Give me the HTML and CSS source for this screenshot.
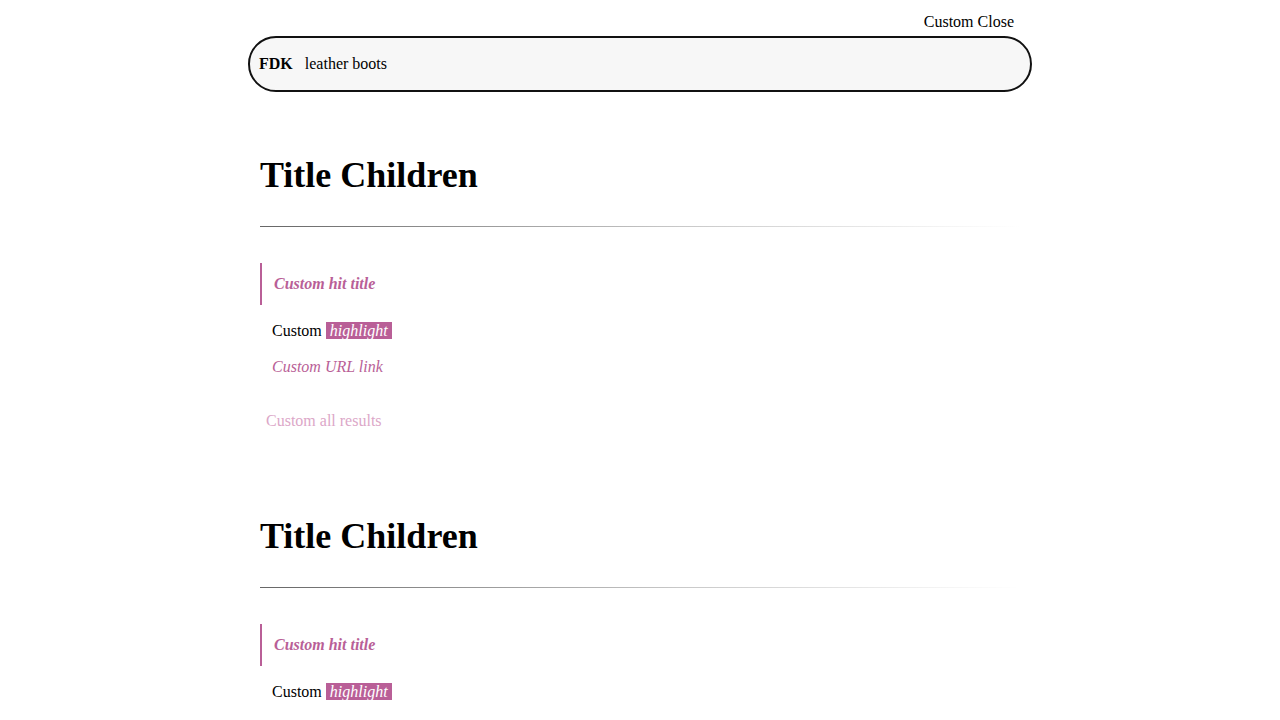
FILE: index.html
```html
<!DOCTYPE html>
<html lang="en">
<head>
<meta charset="utf-8">
<title>Search</title>
<link rel="stylesheet" href="styles.css">
</head>
<body>
<div class="wrap">
  <div class="close-row"><span class="close">Custom Close</span></div>
  <div class="search">
    <span class="logo">FDK</span>
    <span class="query">leather boots</span>
  </div>

  <section class="section">
    <h1 class="title">Title Children</h1>
    <div class="divider"></div>
    <div class="hit">
      <span class="hit-title">Custom hit title</span>
    </div>
    <div class="hit-body">
      <div class="line">Custom <mark class="hl">highlight</mark></div>
      <div class="line link">Custom URL link</div>
    </div>
    <div class="all">Custom all results</div>
  </section>

  <section class="section second">
    <h1 class="title">Title Children</h1>
    <div class="divider"></div>
    <div class="hit">
      <span class="hit-title">Custom hit title</span>
    </div>
    <div class="hit-body">
      <div class="line">Custom <mark class="hl">highlight</mark></div>
      <div class="line link">Custom URL link</div>
    </div>
    <div class="all">Custom all results</div>
  </section>
</div>
</body>
</html>
```

FILE: styles.css
```css
html, body {
  margin: 0;
  padding: 0;
  background: #ffffff;
}

body {
  font-family: "Liberation Serif", "Times New Roman", serif;
  font-size: 16px;
  color: #000;
}

.wrap {
  width: 800px;
  margin: 0 auto;
}

.close-row {
  display: flex;
  justify-content: flex-end;
  padding: 12px 26px 0 0;
  height: 20px;
  line-height: 20px;
  margin-bottom: 4px;
}

.search {
  margin: 0 8px;
  height: 52px;
  border: 2px solid #111;
  border-radius: 28px;
  background: #f7f7f7;
  display: flex;
  align-items: center;
  padding-left: 9px;
  gap: 12px;
}

.logo {
  font-weight: bold;
}

.section {
  padding: 0 20px;
  margin-top: 63px;
}

.section.second {
  margin-top: 85px;
}

.title {
  margin: 0;
  font-size: 36px;
  line-height: 41px;
  font-weight: bold;
}

.divider {
  margin-top: 30px;
  height: 1px;
  background: linear-gradient(to right, #666666, #c8c8c8 55%, #f4f4f4 90%, rgba(255, 255, 255, 0));
}

.hit {
  margin-top: 36px;
  height: 42px;
  border-left: 2px solid #b95f97;
  padding-left: 12px;
  display: flex;
  align-items: center;
}

.hit-title {
  color: #b95f97;
  font-style: italic;
  font-weight: bold;
}

.hit-body {
  padding-left: 12px;
  margin-top: 16px;
  display: flex;
  flex-direction: column;
  gap: 16px;
}

.line {
  line-height: 20px;
}

.hl {
  background: #b95f97;
  color: #fff;
  font-style: italic;
  padding: 0 4px;
}

.link {
  color: #b95f97;
  font-style: italic;
}

.all {
  margin-top: 34px;
  padding-left: 6px;
  line-height: 20px;
  color: #dca7c8;
}
```
